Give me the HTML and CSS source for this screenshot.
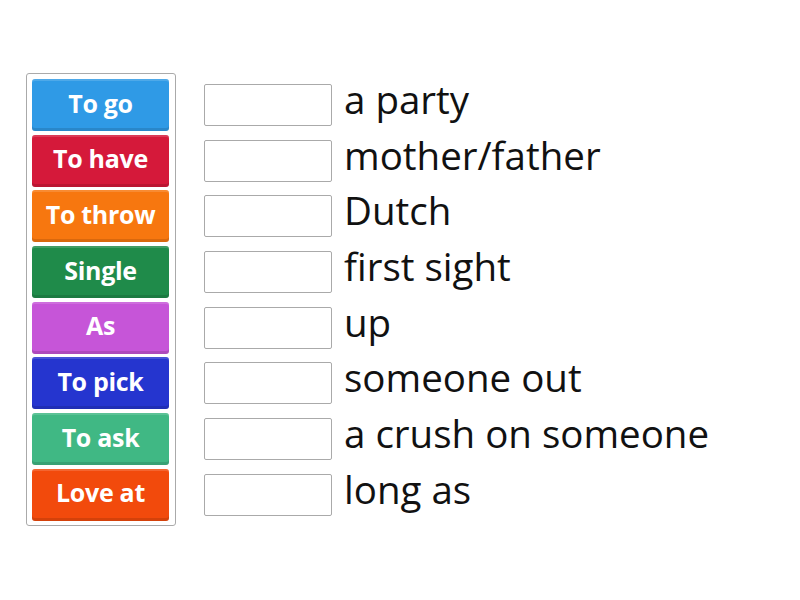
FILE: index.html
```html
<!DOCTYPE html>
<html>
<head>
<meta charset="utf-8">
<link rel="stylesheet" href="styles.css">
</head>
<body>
<div class="page">
  <div class="bank">
    <div class="tile c1">To go</div>
    <div class="tile c2">To have</div>
    <div class="tile c3">To throw</div>
    <div class="tile c4">Single</div>
    <div class="tile c5">As</div>
    <div class="tile c6">To pick</div>
    <div class="tile c7">To ask</div>
    <div class="tile c8">Love at</div>
  </div>
  <div class="rows">
    <div class="row"><div class="slot"></div><span class="phrase">a party</span></div>
    <div class="row"><div class="slot"></div><span class="phrase">mother/father</span></div>
    <div class="row"><div class="slot"></div><span class="phrase">Dutch</span></div>
    <div class="row"><div class="slot"></div><span class="phrase">first sight</span></div>
    <div class="row"><div class="slot"></div><span class="phrase">up</span></div>
    <div class="row"><div class="slot"></div><span class="phrase">someone out</span></div>
    <div class="row"><div class="slot"></div><span class="phrase">a crush on someone</span></div>
    <div class="row"><div class="slot"></div><span class="phrase">long as</span></div>
  </div>
</div>
</body>
</html>
```
FILE: styles.css
```css
html, body {
  margin: 0;
  background: #fff;
  font-family: "Open Sans", sans-serif;
}
.page {
  display: flex;
  align-items: flex-start;
  padding: 73px 0 0 26px;
}
.bank {
  width: 137px;
  border: 1px solid #aaa;
  border-radius: 3px;
  padding: 5px 6px 4px 5px;
  display: flex;
  flex-direction: column;
  gap: 3.7px;
}
.tile {
  height: 52px;
  border-radius: 3px;
  color: #fff;
  font-weight: 700;
  font-size: 25px;
  letter-spacing: -0.3px;
  display: flex;
  align-items: center;
  justify-content: center;
  box-sizing: border-box;
  padding-bottom: 5px;
  box-shadow: inset 0 -3px 0 rgba(0,0,0,0.12), inset 0 2px 0 rgba(255,255,255,0.15);
}
.c1 { background: #2f9ae6; }
.c2 { background: #d5193a; }
.c3 { background: #f7770f; }
.c4 { background: #1f8b4a; }
.c5 { background: #c655d8; }
.c6 { background: #2535cf; }
.c7 { background: #40b884; }
.c8 { background: #f24a0c; }
.rows {
  margin-left: 28px;
  padding-top: 11px;
  display: flex;
  flex-direction: column;
  gap: 13.7px;
}
.row {
  display: flex;
  align-items: center;
  height: 42px;
}
.slot {
  width: 126px;
  height: 40px;
  border: 1px solid #aaa;
  border-radius: 2px;
  background: #fff;
}
.phrase {
  margin-left: 12px;
  font-size: 38.5px;
  color: #111;
  line-height: 42px;
  padding-bottom: 12px;
  white-space: nowrap;
}
```
